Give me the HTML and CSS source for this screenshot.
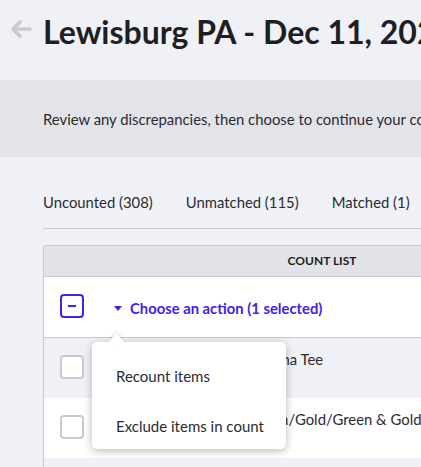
FILE: index.html
```html
<!DOCTYPE html>
<html>
<head>
<meta charset="utf-8">
<link rel="stylesheet" href="styles.css">
</head>
<body>
<div class="page">
  <header class="header">
    <svg class="back" width="22" height="18" viewBox="0 0 22 18"><path d="M20 9H3M10 2L3 9l7 7" fill="none" stroke="#c9cacf" stroke-width="3.6" stroke-linecap="round" stroke-linejoin="round"/></svg>
    <h1 class="title">Lewisburg PA - Dec 11, 2023</h1>
  </header>
  <div class="band">
    <p class="band-text">Review any discrepancies, then choose to continue your count or finalize it.</p>
  </div>
  <main class="content">
    <nav class="tabs">
      <span class="tab">Uncounted (308)</span>
      <span class="tab">Unmatched (115)</span>
      <span class="tab">Matched (1)</span>
    </nav>
    <div class="table">
      <div class="thead">
        <div class="th-check"></div>
        <div class="th">COUNT LIST</div>
      </div>
      <div class="row action-row">
        <div class="cell-check"><span class="checkbox partial"><span class="minus"></span></span></div>
        <div class="action"><span class="caret"></span>Choose an action (1 selected)</div>
        <div class="menu">
          <span class="menu-arrow"></span>
          <div class="menu-item">Recount items</div>
          <div class="menu-item last">Exclude items in count</div>
        </div>
      </div>
      <div class="row alt">
        <div class="cell-check"><span class="checkbox"></span></div>
        <div class="cell-text">Bucknell Bison Big Nonna Tee</div>
      </div>
      <div class="row">
        <div class="cell-check"><span class="checkbox"></span></div>
        <div class="cell-text">Bucknell Bison Lapel Pin/Gold/Green &amp; Gold</div>
      </div>
      <div class="row alt">
        <div class="cell-check"><span class="checkbox"></span></div>
        <div class="cell-text">Bucknell Bison Mug</div>
      </div>
    </div>
  </main>
</div>
</body>
</html>
```
FILE: styles.css
```css
html, body {
  margin: 0;
  padding: 0;
  overflow: hidden;
  background: #f0f1f6;
}
body {
  font-family: Lato, "Open Sans", sans-serif;
  color: #2b2b30;
  width: 421px;
  height: 467px;
}
.page {
  width: 421px;
}
.header {
  height: 80px;
  display: flex;
  align-items: flex-start;
  padding-left: 10px;
  box-sizing: border-box;
}
.back {
  margin-top: 20px;
  flex: none;
}
.title {
  margin: 12px 0 0 11px;
  font-size: 32px;
  line-height: 40px;
  font-weight: 700;
  color: #1e1e23;
  white-space: nowrap;
}
.band {
  background: #e3e4e9;
  height: 77px;
  box-sizing: border-box;
  padding: 29px 0 0 43px;
}
.band-text {
  margin: 0;
  font-size: 14.85px;
  line-height: 20px;
  white-space: nowrap;
  color: #2b2b30;
}
.content {
  padding-left: 43px;
}
.tabs {
  display: flex;
  gap: 33px;
  padding-top: 35px;
  padding-bottom: 16px;
  border-bottom: 1px solid #c9cacf;
  width: 600px;
}
.tab {
  font-size: 14.85px;
  line-height: 20px;
  white-space: nowrap;
  color: #2b2b30;
}
.table {
  margin-top: 16px;
  width: 600px;
  border-left: 1px solid #c9cacf;
  border-top: 1px solid #c9cacf;
  border-top-left-radius: 3px;
}
.thead {
  display: flex;
  height: 30px;
  background: #e2e3e8;
  border-bottom: 1px solid #c9cacf;
  border-top-left-radius: 3px;
}
.th-check {
  width: 86px;
  flex: none;
}
.th {
  width: 384px;
  text-align: center;
  font-size: 12px;
  font-weight: 700;
  line-height: 30px;
  color: #1e1e23;
}
.row {
  display: flex;
  height: 60px;
  background: #ffffff;
  position: relative;
}
.row.alt {
  background: #f0f1f6;
}
.action-row {
  height: 60px;
  border-bottom: 1px solid #c9cacf;
  align-items: center;
}
.cell-check {
  width: 86px;
  flex: none;
  padding-left: 16px;
  box-sizing: border-box;
}
.row:not(.action-row) .cell-check {
  padding-top: 17px;
}
.checkbox {
  display: block;
  width: 24px;
  height: 24px;
  box-sizing: border-box;
  border: 2px solid #c9cacf;
  border-radius: 4px;
  background: #fff;
  position: relative;
}
.checkbox.partial {
  border-color: #4321e6;
  margin-top: -3px;
}
.minus {
  position: absolute;
  left: 6px;
  top: 9px;
  width: 8px;
  height: 2px;
  background: #4321e6;
}
.action {
  display: flex;
  align-items: center;
  margin-left: -16px;
  font-size: 14.8px;
  font-weight: 700;
  color: #4321e6;
  white-space: nowrap;
  line-height: 20px;
  margin-top: 2px;
}
.caret {
  width: 0;
  height: 0;
  border-left: 4px solid transparent;
  border-right: 4px solid transparent;
  border-top: 5px solid #4321e6;
  margin-right: 8px;
}
.cell-text {
  padding-top: 11px;
  font-size: 14.85px;
  line-height: 20px;
  white-space: nowrap;
  color: #2b2b30;
}
.menu {
  position: absolute;
  left: 48px;
  top: 65px;
  width: 194px;
  height: 107px;
  box-sizing: border-box;
  padding-top: 9px;
  background: #fff;
  border-radius: 5px;
  box-shadow: 0 2px 8px rgba(0, 0, 0, 0.28);
  z-index: 5;
}
.menu-arrow {
  position: absolute;
  left: 19px;
  top: -6px;
  width: 11px;
  height: 11px;
  background: #fff;
  transform: rotate(45deg);
  box-shadow: -2px -2px 4px rgba(0, 0, 0, 0.08);
}
.menu-item {
  position: relative;
  height: 50px;
  line-height: 50px;
  padding-left: 24px;
  font-size: 15px;
  color: #2b2b30;
  white-space: nowrap;
}
.menu-item.last {
  height: 48px;
}
```
